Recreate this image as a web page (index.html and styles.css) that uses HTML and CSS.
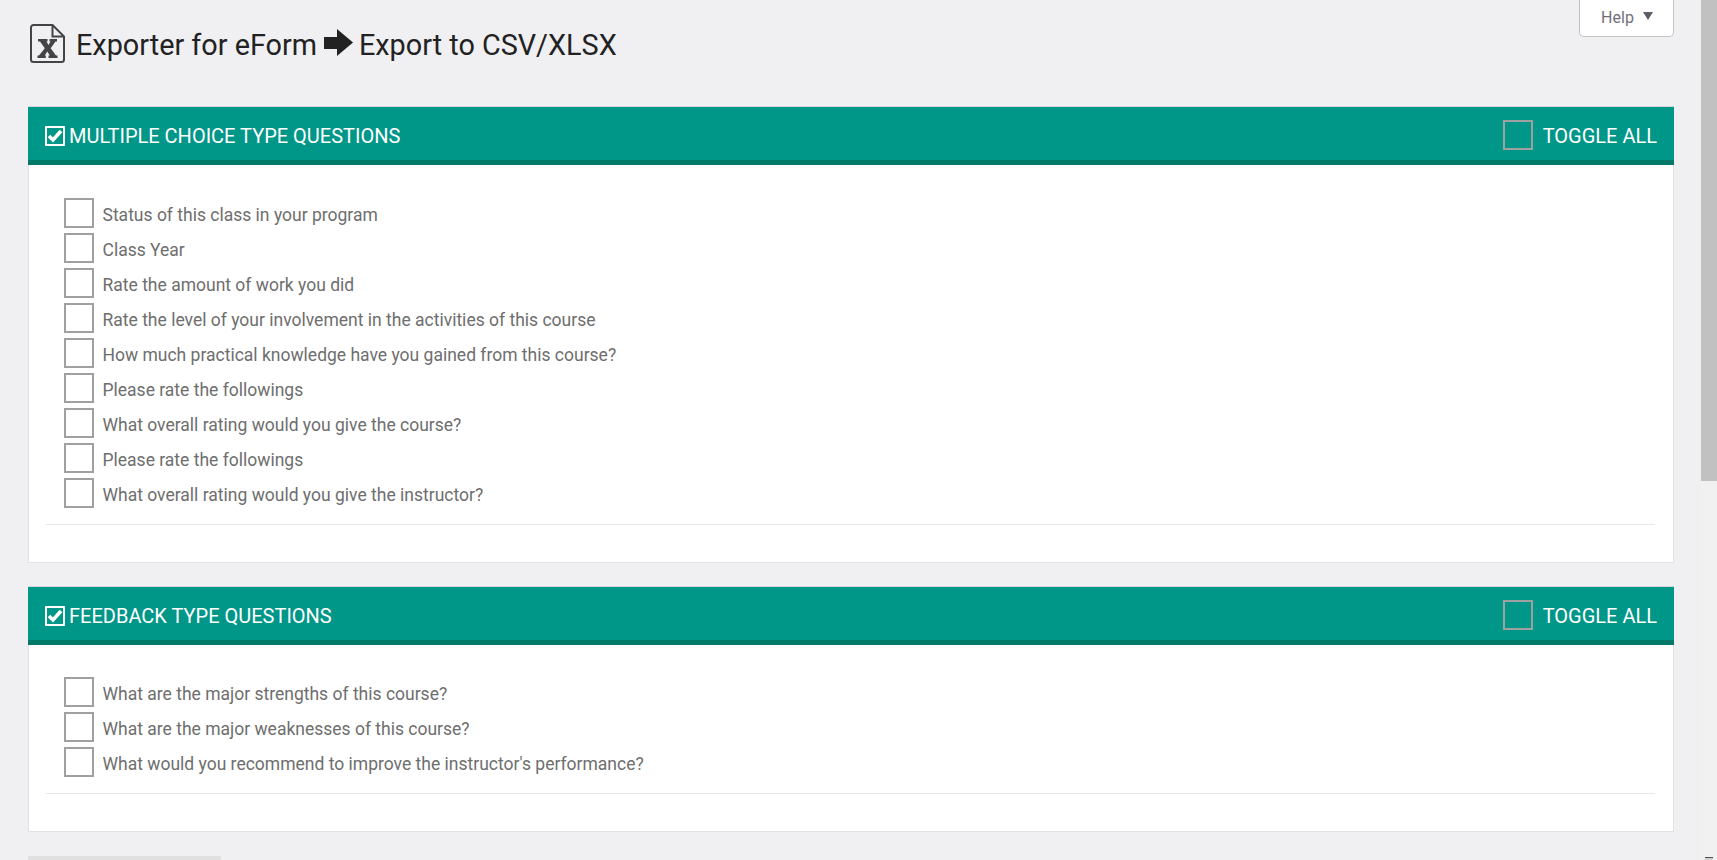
FILE: index.html
```html
<!DOCTYPE html>
<html lang="en">
<head>
<meta charset="utf-8">
<title>Exporter for eForm</title>
<link rel="stylesheet" href="styles.css">
</head>
<body>
<div class="app">
  <main class="main">
    <header class="page-head">
      <h1 class="title">
        <svg class="file-icon" width="35" height="39" viewBox="0 0 35 39" aria-hidden="true">
          <path d="M3.500 1H22.500L34 12.500V35.500A2.500 2.500 0 0 1 31.500 38H3.500A2.500 2.500 0 0 1 1 35.500V3.500A2.500 2.500 0 0 1 3.500 1Z" fill="none" stroke="#444" stroke-width="2"/>
          <path d="M22.500 1V12.500H34" fill="none" stroke="#444" stroke-width="2"/>
          <path d="M8 15H17.500V17.500H16.500L18.500 21 20.500 17.500H19.500V15H27V17.500H25.500L20.700 24.300 26 31.500H27.500V34H18.500V31.500H19.800L17.300 27.500 14.800 31.500H15.800V34H7.500V31.500H9L14.800 24.300 10 17.500H8Z" fill="#444"/>
        </svg>
        <span>Exporter for eForm</span>
        <svg class="arrow-icon" width="29" height="27" viewBox="0 0 29 27" aria-hidden="true">
          <path d="M0 8H13V0L29 13.500 13 27V20H0Z" fill="#222"/>
        </svg>
        <span>Export to CSV/XLSX</span>
      </h1>
      <button class="help" type="button">Help <span class="caret"></span></button>
    </header>

    <section class="panel">
      <div class="panel-head">
        <div class="panel-title">
          <span class="checked"><svg width="16" height="14" viewBox="0 0 16 14" aria-hidden="true"><path d="M2 7l4 4 8-9" fill="none" stroke="#fff" stroke-width="3.600"/></svg></span>
          MULTIPLE CHOICE TYPE QUESTIONS
        </div>
        <label class="toggle"><span class="box"></span>TOGGLE ALL</label>
      </div>
      <div class="panel-body">
        <ul class="questions">
          <li class="question"><span class="box"></span><span class="q-text">Status of this class in your program</span></li>
          <li class="question"><span class="box"></span><span class="q-text">Class Year</span></li>
          <li class="question"><span class="box"></span><span class="q-text">Rate the amount of work you did</span></li>
          <li class="question"><span class="box"></span><span class="q-text">Rate the level of your involvement in the activities of this course</span></li>
          <li class="question"><span class="box"></span><span class="q-text">How much practical knowledge have you gained from this course?</span></li>
          <li class="question"><span class="box"></span><span class="q-text">Please rate the followings</span></li>
          <li class="question"><span class="box"></span><span class="q-text">What overall rating would you give the course?</span></li>
          <li class="question"><span class="box"></span><span class="q-text">Please rate the followings</span></li>
          <li class="question"><span class="box"></span><span class="q-text">What overall rating would you give the instructor?</span></li>
        </ul>
        <hr class="rule">
      </div>
    </section>

    <section class="panel">
      <div class="panel-head">
        <div class="panel-title">
          <span class="checked"><svg width="16" height="14" viewBox="0 0 16 14" aria-hidden="true"><path d="M2 7l4 4 8-9" fill="none" stroke="#fff" stroke-width="3.600"/></svg></span>
          FEEDBACK TYPE QUESTIONS
        </div>
        <label class="toggle"><span class="box"></span>TOGGLE ALL</label>
      </div>
      <div class="panel-body">
        <ul class="questions">
          <li class="question"><span class="box"></span><span class="q-text">What are the major strengths of this course?</span></li>
          <li class="question"><span class="box"></span><span class="q-text">What are the major weaknesses of this course?</span></li>
          <li class="question"><span class="box"></span><span class="q-text">What would you recommend to improve the instructor's performance?</span></li>
        </ul>
        <hr class="rule">
      </div>
    </section>

    <div class="next-bar"></div>
  </main>
  <div class="scrollbar">
    <div class="thumb"></div>
    <div class="scroll-end"></div>
  </div>
</div>
</body>
</html>
```

FILE: styles.css
```css
* { box-sizing: border-box; }
html, body { margin: 0; height: 860px; overflow: hidden; }
body { background: #f0f0f2; font-family: Roboto, "Liberation Sans", sans-serif; }
.app { display: flex; height: 860px; overflow: hidden; }
.main { flex: 1; min-width: 0; padding: 0 27px 0 28px; overflow: hidden; }

.page-head { display: flex; justify-content: space-between; align-items: flex-start; height: 106px; }
.title { display: flex; align-items: center; margin: 23px 0 0 2px; font-size: 28.800px; font-weight: 400; color: #222; line-height: 44px; }
.file-icon { margin: -3px 11px 0 0; }
.arrow-icon { margin: -5px 6px 0 7px; }
.help { width: 95px; height: 37px; background: #fff; border: 1px solid #c4c4c4; border-top: 0; border-radius: 0 0 5px 5px; font: 400 16px Roboto, sans-serif; color: #6f6f78; padding: 0 0 2px 1px; display: flex; align-items: center; justify-content: center; gap: 9px; }
.caret { width: 0; height: 0; border-left: 5px solid transparent; border-right: 5px solid transparent; border-top: 8px solid #5d5d66; margin-top: -3px; }

.panel { background: #fff; border: 1px solid #e2e2e5; border-top: 0; margin-bottom: 23px; }
.panel + .panel { margin-bottom: 24px; }
.panel-head { display: flex; justify-content: space-between; align-items: center; height: 59px; margin: 0 -1px; background: #009688; border-top: 1px solid #d6d6d6; border-bottom: 5px solid #00796b; color: #fff; padding: 5px 17px 0 17px; font-size: 20px; }
.panel-title { display: flex; align-items: center; gap: 4px; }
.checked { display: flex; align-items: center; justify-content: center; width: 20px; height: 20px; border: 2px solid #fff; }
.toggle { display: flex; align-items: center; gap: 10px; }
.toggle .box { margin-top: -2px; }
.box { display: block; flex: none; width: 30px; height: 30px; border: 2px solid #a0a0a0; }

.panel-body { padding: 33px 18px 0 17px; }
.panel + .panel .panel-body { padding-top: 32px; }
.questions { list-style: none; margin: 0; padding: 0 0 0 18px; }
.question { display: flex; align-items: flex-start; height: 35px; }
.q-text { margin-left: 8.500px; padding-top: 4px; font-size: 17.500px; line-height: 26px; color: #6e6e6e; }
.rule { border: 0; border-top: 1px solid #e8e8e8; margin: 11px 0 37px; }

.next-bar { width: 193px; height: 10px; background: #e0e0e0; }

.scrollbar { flex: none; width: 16px; height: 860px; background: #f1f1f1; display: flex; flex-direction: column; justify-content: space-between; align-items: center; }
.thumb { width: 16px; height: 481px; background: #c1c1c1; }
.scroll-end { width: 8px; height: 3px; background: #d0d0d0; border-top: 1px solid #505050; }
```
